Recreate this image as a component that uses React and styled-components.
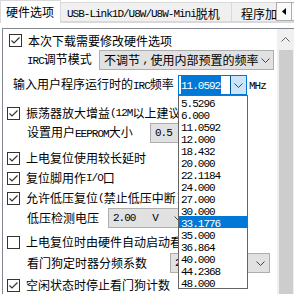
import React from "react";
import styled, { createGlobalStyle } from "styled-components";

const GlobalStyle = createGlobalStyle`
  html, body { margin: 0; padding: 0; background: #fff; }
  body {
    font-family: "Noto Sans CJK SC", "Noto Sans", sans-serif;
    font-size: 12px;
    line-height: 12px;
    color: #000;
  }
`;

const Latin = styled.span`
  font-family: "Liberation Mono", "DejaVu Sans Mono", monospace;
  font-size: 11px;
  letter-spacing: -1px;
  white-space: pre;
`;

// split a label into ascii / cjk runs so ascii gets the half-width mono face
function Txt({ children }) {
  return String(children)
    .split(/([\x20-\x7e]+)/)
    .filter(Boolean)
    .map((part, i) =>
      /^[\x20-\x7e]+$/.test(part) ? <Latin key={i}>{part}</Latin> : <span key={i}>{part}</span>
    );
}

const Screen = styled.div`
  width: 294px;
  height: 294px;
  overflow: hidden;
  position: relative;
  background: #fff;
  display: flex;
  flex-direction: column;
`;

const TabStrip = styled.div`
  position: relative;
  display: flex;
  align-items: flex-end;
  height: 23px;
  box-sizing: border-box;
  border-bottom: 1px solid #d9d9d9;
  flex: none;
`;

const Tab = styled.div`
  box-sizing: border-box;
  display: flex;
  align-items: center;
  white-space: nowrap;
  overflow: hidden;
  flex: none;
  width: ${(p) => p.$w}px;
  height: ${(p) => (p.$active ? 23 : 20)}px;
  margin-bottom: ${(p) => (p.$active ? -1 : 0)}px;
  padding: ${(p) => (p.$active ? "0 0 0 5px" : "3px 0 0 " + (p.$pl || 5) + "px")};
  margin-left: ${(p) => (p.$active ? 0 : -1)}px;
  background: ${(p) => (p.$active ? "#fff" : "#f0f0f0")};
  border: 1px solid #d9d9d9;
  border-bottom: ${(p) => (p.$active ? "none" : "1px solid #d9d9d9")};
  position: relative;
  z-index: ${(p) => (p.$active ? 2 : 1)};
`;

const TabScroller = styled.div`
  position: absolute;
  left: 276px;
  top: 2px;
  display: flex;
  z-index: 3;
`;

const ScrollBtn = styled.div`
  width: 16px;
  height: 19px;
  box-sizing: border-box;
  border: 1px solid #adadad;
  margin-right: -1px;
  background: #fafafa;
  display: flex;
  align-items: center;
  justify-content: center;
`;

const Panel = styled.div`
  flex: 1;
  min-height: 0;
  margin: 5px 0 0 2px;
  border-top: 1px solid #828790;
  border-left: 1px solid #828790;
  display: flex;
`;

const Content = styled.div`
  flex: 1;
  min-width: 0;
  padding-top: 2px;
  display: flex;
  flex-direction: column;
  position: relative;
`;

const ScrollBar = styled.div`
  width: 17px;
  flex: none;
  background: #f0f0f0;
  display: flex;
  flex-direction: column;
`;

const ScrollArrow = styled.div`
  height: 21px;
  display: flex;
  align-items: center;
  justify-content: center;
`;

const Thumb = styled.div`
  flex: 1;
  margin: 0 1px 0 2px;
  background: #cdcdcd;
`;

const Row = styled.div`
  display: flex;
  align-items: center;
  flex: none;
  white-space: nowrap;
  height: ${(p) => p.$h || 20}px;
  margin-top: ${(p) => p.$gap || 0}px;
  padding-left: ${(p) => p.$indent}px;
`;

const Label = styled.div`
  flex: none;
  width: ${(p) => p.$w}px;
  white-space: nowrap;
`;

const Box = styled.svg`
  flex: none;
  margin-right: 6px;
`;

function Check({ on }) {
  return (
    <Box width="13" height="13" viewBox="0 0 13 13">
      <rect x="0.5" y="0.5" width="12" height="12" fill="#fff" stroke="#333" />
      {on && (
        <polyline points="2.5,6.5 5,9 10.5,3.5" fill="none" stroke="#333" strokeWidth="1.2" />
      )}
    </Box>
  );
}

const Select = styled.div`
  box-sizing: border-box;
  display: flex;
  align-items: center;
  justify-content: space-between;
  flex: none;
  width: ${(p) => p.$w}px;
  height: 20px;
  padding: 0 ${(p) => p.$pr || 4}px 0 4px;
  background: #e1e1e1;
  border: 1px solid #adadad;
`;

const Combo = styled.div`
  position: relative;
  box-sizing: border-box;
  display: flex;
  align-items: center;
  flex: none;
  width: 69px;
  height: 20px;
  background: #fff;
  border: 1px solid #0078d7;
`;

const Selection = styled.span`
  margin-left: 2px;
  padding-right: 1px;
  background: #0078d7;
  color: #fff;
  line-height: 15px;
`;

const ComboButton = styled.div`
  margin-left: auto;
  width: 15px;
  height: 18px;
  background: #cce4f7;
  border-left: 1px solid #005499;
  display: flex;
  align-items: center;
  justify-content: center;
`;

const Unit = styled.span`
  margin-left: 2px;
`;

const Popup = styled.div`
  position: absolute;
  left: -1px;
  top: calc(100% + 1px);
  width: 70px;
  box-sizing: border-box;
  background: #fff;
  border: 1px solid #646464;
  z-index: 5;
`;

const Option = styled.div`
  height: 12px;
  line-height: 12px;
  padding-left: 2px;
  background: ${(p) => (p.$sel ? "#0078d7" : "transparent")};
  color: ${(p) => (p.$sel ? "#fff" : "#000")};
`;

function Chevron({ up }) {
  return (
    <svg width="9" height="5" viewBox="0 0 9 5">
      <polyline
        points={up ? "0.5,4.5 4.5,0.5 8.5,4.5" : "0.5,0.5 4.5,4.5 8.5,0.5"}
        fill="none"
        stroke={up ? "#606060" : "#444"}
        strokeWidth="1"
      />
    </svg>
  );
}

const freqs = [
  "5.5296", "6.000", "11.0592", "12.000", "18.432", "20.000", "22.1184", "24.000",
  "27.000", "30.000", "33.1776", "35.000", "36.864", "40.000", "44.2368", "48.000",
];

export default function App() {
  return (
    <Screen>
      <GlobalStyle />
      <TabStrip>
        <Tab $active $w={61}>硬件选项</Tab>
        <Tab $w={172} $pl={6}><Txt>USB-Link1D/U8W/U8W-Mini脱机</Txt></Tab>
        <Tab $w={80} $pl={9}>程序加密后传输</Tab>
        <TabScroller>
          <ScrollBtn>
            <svg width="4" height="7" viewBox="0 0 4 7"><polygon points="4,0 0,3.5 4,7" fill="#000" /></svg>
          </ScrollBtn>
          <ScrollBtn>
            <svg width="4" height="7" viewBox="0 0 4 7"><polygon points="0,0 4,3.5 0,7" fill="#000" /></svg>
          </ScrollBtn>
        </TabScroller>
      </TabStrip>

      <Panel>
        <Content>
          <Row $indent={6} $h={19}>
            <Check on />
            <span>本次下载需要修改硬件选项</span>
          </Row>
          <Row $indent={24}>
            <Label $w={72}><Txt>IRC调节模式</Txt></Label>
            <Select $w={175} $pr={3}>
              <Txt>不调节,使用内部预置的频率</Txt>
              <Chevron />
            </Select>
          </Row>
          <Row $indent={10} $gap={5}>
            <Label $w={165}><Txt>输入用户程序运行时的IRC频率</Txt></Label>
            <Combo>
              <Selection><Latin>11.0592</Latin></Selection>
              <ComboButton><Chevron /></ComboButton>
              <Popup>
                {freqs.map((f) => (
                  <Option key={f} $sel={f === "33.1776"}><Latin>{f}</Latin></Option>
                ))}
              </Popup>
            </Combo>
            <Unit><Latin>MHz</Latin></Unit>
          </Row>
          <Row $indent={4} $gap={8}>
            <Check on />
            <Txt>振荡器放大增益(12M以上建议选择)</Txt>
          </Row>
          <Row $indent={24}>
            <Label $w={123}><Txt>设置用户EEPROM大小</Txt></Label>
            <Select $w={60}>
              <Latin>0.5 K</Latin>
              <Chevron />
            </Select>
          </Row>
          <Row $indent={4} $gap={5}>
            <Check on />
            <span>上电复位使用较长延时</span>
          </Row>
          <Row $indent={4}>
            <Check on />
            <Txt>复位脚用作I/O口</Txt>
          </Row>
          <Row $indent={4}>
            <Check on />
            <Txt>允许低压复位(禁止低压中断)</Txt>
          </Row>
          <Row $indent={24}>
            <Label $w={81}>低压检测电压</Label>
            <Select $w={80}>
              <Latin>2.00   V</Latin>
              <Chevron />
            </Select>
          </Row>
          <Row $indent={4} $gap={4}>
            <Check />
            <span>上电复位时由硬件自动启动看门狗</span>
          </Row>
          <Row $indent={24} $gap={1}>
            <Label $w={143}>看门狗定时器分频系数</Label>
            <Select $w={100}>
              <Latin>256</Latin>
              <Chevron />
            </Select>
          </Row>
          <Row $indent={4} $gap={2}>
            <Check on />
            <span>空闲状态时停止看门狗计数</span>
          </Row>
        </Content>
        <ScrollBar>
          <ScrollArrow><Chevron up /></ScrollArrow>
          <Thumb />
        </ScrollBar>
      </Panel>
    </Screen>
  );
}
